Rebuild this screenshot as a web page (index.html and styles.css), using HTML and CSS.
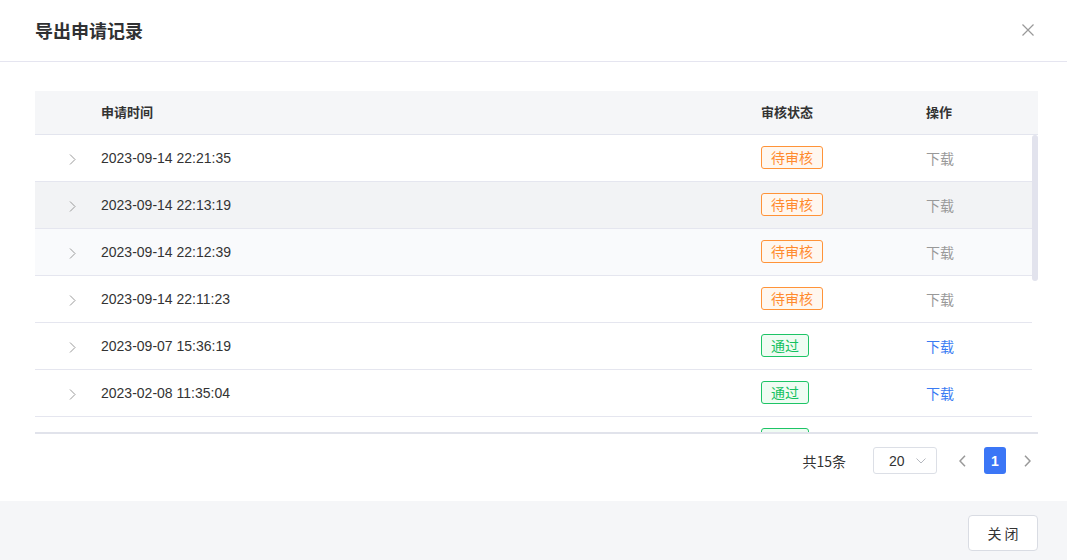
FILE: index.html
```html
<!DOCTYPE html>
<html lang="zh-CN">
<head>
    <meta charset="UTF-8">
    <title>导出申请记录</title>
    <link rel="stylesheet" href="styles.css">
</head>
<body>
    <div class="dialog">
        <div class="dialog-header">
            <span class="dialog-title">导出申请记录</span>
            <span class="dialog-close">
                <svg width="12" height="12" viewBox="0 0 12 12"><path d="M0.5 0.5L11.5 11.5M11.5 0.5L0.5 11.5" stroke="#999" stroke-width="1.2" fill="none"/></svg>
            </span>
        </div>

        <div class="dialog-body">
            <div class="table">
                <div class="table-head">
                    <div></div>
                    <div>申请时间</div>
                    <div>审核状态</div>
                    <div>操作</div>
                </div>
                <div class="table-body">
                    <div class="table-rows" id="rows"></div>
                    <div class="scroll-track"><div class="scroll-thumb"></div></div>
                </div>
            </div>

            <div class="pager">
                <span class="pager-total">共15条</span>
                <span class="pager-size">20
                    <svg width="10" height="6" viewBox="0 0 10 6"><path d="M0.5 0.5L5 5L9.5 0.5" stroke="#b5b8bf" stroke-width="1" fill="none"/></svg>
                </span>
                <span class="pager-arrow">
                    <svg width="7" height="12" viewBox="0 0 7 12"><path d="M6 0.7L1 6L6 11.3" stroke="#999" stroke-width="1.5" fill="none"/></svg>
                </span>
                <span class="pager-num">1</span>
                <span class="pager-arrow">
                    <svg width="7" height="12" viewBox="0 0 7 12"><path d="M1 0.7L6 6L1 11.3" stroke="#999" stroke-width="1.5" fill="none"/></svg>
                </span>
            </div>
        </div>

        <div class="dialog-footer">
            <button class="btn">关 闭</button>
        </div>
    </div>

    <script>
        const records = [
            ['2023-09-14 22:21:35', 'wait'],
            ['2023-09-14 22:13:19', 'wait'],
            ['2023-09-14 22:12:39', 'wait'],
            ['2023-09-14 22:11:23', 'wait'],
            ['2023-09-07 15:36:19', 'pass'],
            ['2023-02-08 11:35:04', 'pass'],
            ['2023-02-07 10:12:48', 'pass']
        ];

        const chevron = '<svg width="7" height="11" viewBox="0 0 7 11"><path d="M1 0.5L6 5.5L1 10.5" stroke="#999" stroke-width="1" fill="none"/></svg>';

        let html = '';
        records.forEach((r, i) => {
            let cls = 'row';
            if (i === 1) cls += ' row-hover';
            if (i === 2) cls += ' row-stripe';
            const tag = r[1] === 'wait'
                ? '<span class="tag tag-wait">待审核</span>'
                : '<span class="tag tag-pass">通过</span>';
            const link = r[1] === 'wait'
                ? '<span class="link disabled">下载</span>'
                : '<span class="link">下载</span>';
            html += '<div class="' + cls + '">' +
                '<div class="expand">' + chevron + '</div>' +
                '<div>' + r[0] + '</div>' +
                '<div>' + tag + '</div>' +
                '<div>' + link + '</div>' +
                '</div>';
        });
        document.getElementById('rows').innerHTML = html;
    </script>
</body>
</html>
```

FILE: styles.css
```css
html, body {
    margin: 0;
    padding: 0;
    background: #fff;
}
body {
    font-family: "Liberation Sans", Arial, "Noto Sans CJK SC", sans-serif;
    font-size: 14px;
    color: #333;
}
.dialog {
    width: 1067px;
    height: 560px;
    display: flex;
    flex-direction: column;
    background: #fff;
}
.dialog-header {
    height: 62px;
    box-sizing: border-box;
    border-bottom: 1px solid #e5e5f0;
    display: flex;
    align-items: center;
    justify-content: space-between;
    padding: 0 33px 2px 35px;
}
.dialog-title {
    font-size: 18px;
    font-weight: bold;
    color: #303133;
    font-family: "Noto Sans CJK SC", sans-serif;
}
.dialog-close {
    display: flex;
}
.dialog-body {
    padding: 29px 29px 0 35px;
    height: 439px;
    box-sizing: border-box;
}
.table-head {
    display: grid;
    grid-template-columns: 66px 1fr 165px 112px;
    height: 44px;
    box-sizing: border-box;
    align-items: center;
    padding-bottom: 3px;
    background: #f5f6f8;
    border-bottom: 1px solid #e3e5ee;
    font-weight: bold;
    font-family: "Noto Sans CJK SC", sans-serif;
    font-size: 13px;
    color: #333;
}
.table-body {
    display: flex;
    height: 299px;
    box-sizing: border-box;
    overflow: hidden;
    border-bottom: 2px solid #e1e3eb;
}
.table-rows {
    flex: 1;
    overflow: hidden;
}
.scroll-track {
    width: 6px;
    background: #fff;
}
.scroll-thumb {
    height: 146px;
    background: #e2e3ed;
    border-radius: 3px;
}
.row {
    display: grid;
    grid-template-columns: 66px 1fr 165px 106px;
    height: 47px;
    box-sizing: border-box;
    align-items: center;
    padding-bottom: 1px;
    border-bottom: 1px solid #e5e6ef;
    color: #333;
}
.row-hover {
    background: #f2f3f5;
}
.row-stripe {
    background: #f9fafc;
}
.expand {
    display: flex;
    padding-left: 34px;
    padding-top: 3px;
}
.tag {
    display: inline-block;
    height: 23px;
    line-height: 21px;
    box-sizing: border-box;
    padding: 0 9px;
    border-radius: 3px;
    font-size: 14px;
    font-family: "Noto Sans CJK SC", sans-serif;
}
.tag-wait {
    color: #ff8a2e;
    background: #fff7ef;
    border: 1px solid #ff9338;
}
.tag-pass {
    color: #14c160;
    background: #effcf3;
    border: 1px solid #1dc466;
}
.link {
    color: #3a7bf3;
    font-family: "Noto Sans CJK SC", sans-serif;
    font-size: 14px;
}
.link.disabled {
    color: #999;
}
.pager {
    display: flex;
    justify-content: flex-end;
    align-items: center;
    height: 53px;
    padding-right: 6px;
}
.pager-total {
    margin-right: 27px;
    font-family: "Noto Sans CJK SC", sans-serif;
    font-size: 14px;
}
.pager-size {
    width: 64px;
    height: 27px;
    box-sizing: border-box;
    border: 1px solid #dcdfe6;
    border-radius: 3px;
    display: flex;
    align-items: center;
    justify-content: space-between;
    padding: 0 10px 0 15px;
    margin-right: 20px;
    color: #333;
}
.pager-arrow {
    display: flex;
    width: 10px;
    justify-content: center;
}
.pager-num {
    width: 22px;
    height: 27px;
    border-radius: 3px;
    background: #3b76f6;
    color: #fff;
    font-weight: bold;
    display: flex;
    align-items: center;
    justify-content: center;
    margin: 0 16px 0 17px;
}
.dialog-footer {
    flex: 1;
    background: #f5f6f8;
    display: flex;
    justify-content: flex-end;
    align-items: flex-start;
    padding: 14px 29px 0 0;
}
.btn {
    width: 70px;
    height: 36px;
    background: #fff;
    border: 1px solid #d9dce3;
    border-radius: 4px;
    font-family: "Noto Sans CJK SC", sans-serif;
    font-size: 14px;
    color: #333;
    cursor: pointer;
}
```
